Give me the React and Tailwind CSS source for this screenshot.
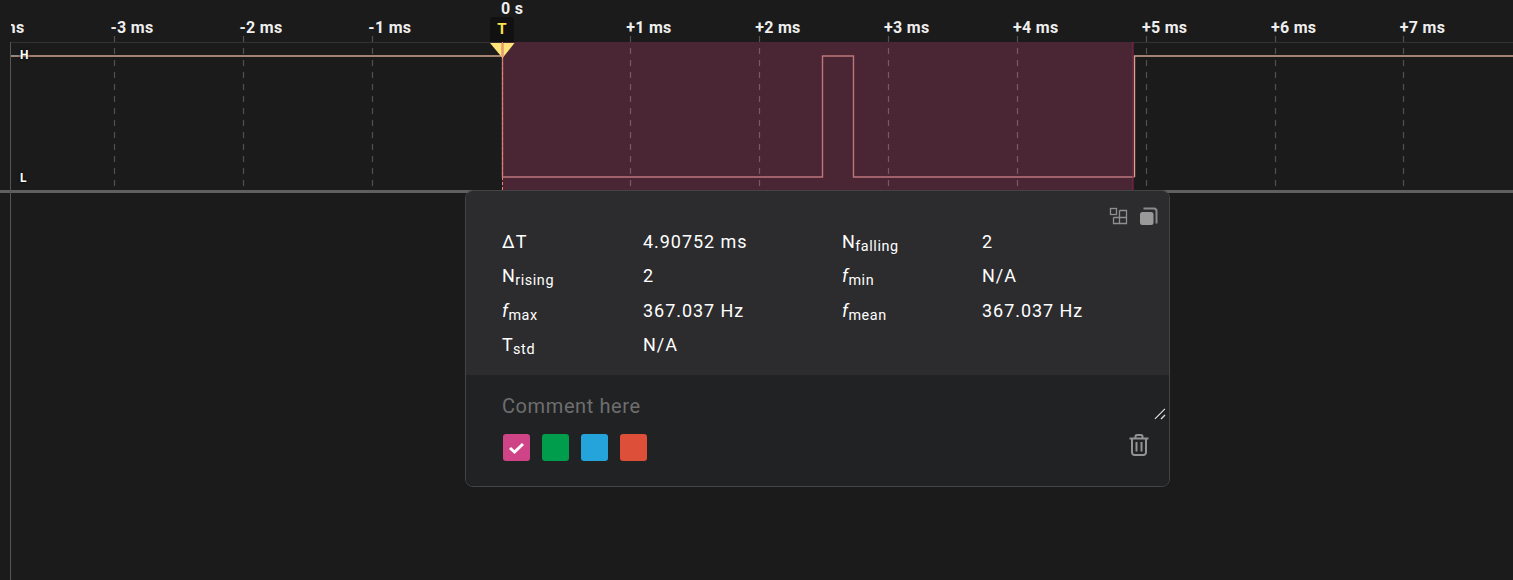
import React from 'react';

const ticks = [-14.5, 114.5, 243.5, 372.5, 630.5, 759.5, 888.5, 1017.5, 1146.5, 1275.5, 1403.5];
const labels = ['-4 ms', '-3 ms', '-2 ms', '-1 ms', '', '+1 ms', '+2 ms', '+3 ms', '+4 ms', '+5 ms', '+6 ms', '+7 ms'];
const swatches = ['bg-[#cf4486]', 'bg-[#009d4d]', 'bg-[#25a4dc]', 'bg-[#de4f3a]'];

function Sub({ main, sub, italic }) {
  return (
    <span>
      <span className={italic ? 'italic tracking-[0.3px]' : 'tracking-[0.3px]'}>{main}</span>
      <span className="relative top-[3px] text-[14.4px] tracking-[0.6px]">{sub}</span>
    </span>
  );
}

function Trace() {
  return (
    <svg className="absolute left-0 top-0" width="1513" height="192" fill="none">
      <rect x="502" y="42" width="631" height="148" fill="#4a2635" />
      {ticks.map((x) => (
        <line key={x} x1={x} x2={x} y1="36" y2="190" stroke="#fff" strokeOpacity="0.24" strokeWidth="1.2" strokeDasharray="6 6" />
      ))}
      <path d="M11 56H502" stroke="#d4a68e" strokeWidth="1.4" />
      <path d="M502.5 56V177H822.5V56H853.5V177H1134.5" stroke="#bd777b" strokeWidth="1.4" />
      <path d="M1134.5 177V56H1513" stroke="#d4a68e" strokeWidth="1.4" />
      <path d="M502.5 42V190" stroke="#e8836b" strokeDasharray="3 2" />
      <path d="M1133 42V190" stroke="#8d2350" />
      <path d="M490 43H514.5L502.5 58Z" fill="#ffe57a" />
      <path d="M502.5 43V57" stroke="#e89a70" strokeWidth="2.5" />
      <path d="M11 55.5H18" stroke="#8a8a8a" />
    </svg>
  );
}

function LayoutIcon() {
  return (
    <svg width="19" height="18" viewBox="0 0 19 18" fill="none" stroke="#8f8f8f" strokeWidth="1.3">
      <rect x="1.5" y="1.5" width="6" height="6" />
      <path d="M4.5 10.5H17.5M10.5 3.5H17.5V16.5H4.5V10.5M10.5 3.5V16.5" />
    </svg>
  );
}

function CopyIcon() {
  return (
    <svg width="19" height="18" viewBox="0 0 19 18" fill="none">
      <rect x="1" y="5" width="13.5" height="13" rx="2.5" fill="#9a9a9a" />
      <path d="M4.5 1.5H15A2.5 2.5 0 0 1 17.5 4V16.5" stroke="#8a8a8a" strokeWidth="2" />
    </svg>
  );
}

function TrashIcon() {
  return (
    <svg width="20" height="22" viewBox="0 0 20 22" fill="none" stroke="#939393" strokeWidth="2">
      <path d="M0.5 4.5H19.5M6.5 4.5V2.5A1.5 1.5 0 0 1 8 1H12A1.5 1.5 0 0 1 13.5 2.5V4.5" />
      <path d="M3 4.5V18.5A2.5 2.5 0 0 0 5.5 21H14.5A2.5 2.5 0 0 0 17 18.5V4.5" />
      <path d="M7.5 8V17.5M12.5 8V17.5" />
    </svg>
  );
}

function ResizeGrip() {
  return (
    <svg className="absolute left-[688px] top-[32px]" width="13" height="13" viewBox="0 0 13 13" fill="none" strokeWidth="1.4">
      <path d="M1 12L11 2M7 12L11 8" stroke="#d8d8d8" />
      <path d="M1.5 13L12 2.5" stroke="#000" strokeWidth="0.8" />
    </svg>
  );
}

function Popup() {
  return (
    <div className="absolute left-[465px] top-[190px] w-[705px] h-[297px] flex flex-col rounded-lg border border-[#444446] overflow-hidden font-['Roboto',sans-serif] text-[18px] text-white tracking-[0.95px]">
      <div className="relative h-[184px] bg-[#2c2c2e] pl-[36px] pt-[31.6px]">
        <div className="absolute right-[11px] top-[16px] flex gap-[11px]">
          <LayoutIcon />
          <CopyIcon />
        </div>
        <div className="grid grid-cols-[141px_199px_140px_1fr] auto-rows-[34.6px] leading-[38px]">
          <span>ΔT</span>
          <span>4.90752 ms</span>
          <Sub main="N" sub="falling" />
          <span>2</span>
          <Sub main="N" sub="rising" />
          <span>2</span>
          <Sub main="f" sub="min" italic />
          <span>N/A</span>
          <Sub main="f" sub="max" italic />
          <span>367.037 Hz</span>
          <Sub main="f" sub="mean" italic />
          <span>367.037 Hz</span>
          <Sub main="T" sub="std" />
          <span>N/A</span>
        </div>
      </div>
      <div className="relative flex-1 bg-[#212224] pl-[36px] pt-[18px]">
        <textarea
          className="block w-[664px] h-[27px] bg-transparent outline-none tracking-[0.6px] text-[20px] leading-[26px] text-white placeholder:text-[#6e6e6e] resize-none"
          placeholder="Comment here"
        />
        <ResizeGrip />
        <div className="mt-[14px] ml-px flex gap-[12px]">
          {swatches.map((c, i) => (
            <div key={c} className={`${c} w-[27px] h-[27px] rounded-[3px] flex items-center justify-center`}>
              {i === 0 && (
                <svg width="15" height="12" viewBox="0 0 15 12" fill="none" stroke="#fff" strokeWidth="3">
                  <path d="M1 6L5.5 10L14 2" />
                </svg>
              )}
            </div>
          ))}
        </div>
        <div className="absolute right-[20px] bottom-[30px]">
          <TrashIcon />
        </div>
      </div>
    </div>
  );
}

export default function App() {
  return (
    <div className="relative w-[1513px] h-[580px] overflow-hidden bg-[#1b1b1b] font-['Roboto',sans-serif]">
      <div className="ml-[11px] h-[43px] overflow-hidden border-b border-[#333335]">
        <div className="flex ml-[-29.5px] pt-[17.5px] text-[16px] leading-[20px] font-bold tracking-[0.3px] text-[#eeeeee]">
          {labels.map((l, i) => (
            <span key={i} className="w-[128.95px] shrink-0 whitespace-nowrap">{l}</span>
          ))}
        </div>
      </div>
      <div className="h-[147px]"></div>
      <div className="h-[3px] bg-[#606062]"></div>
      <div className="absolute left-[10px] top-[42px] bottom-0 w-px bg-[#555557]"></div>
      <Trace />
      <span className="absolute left-[20px] top-[48px] text-[12px] leading-[14px] font-bold text-white [text-shadow:0_0_3px_#000]">H</span>
      <span className="absolute left-[20px] top-[171px] text-[12px] leading-[14px] font-bold text-white [text-shadow:0_0_3px_#000]">L</span>
      <span className="absolute left-[501px] top-0 text-[16px] leading-[18px] font-bold tracking-[0.3px] text-[#eeeeee]">0 s</span>
      <div className="absolute left-[490px] top-[17px] w-[24px] h-[25px] bg-[#111111] rounded-t-[3px] flex items-center justify-center text-[15px] font-bold text-[#ffe14d]">T</div>
      <Popup />
    </div>
  );
}
